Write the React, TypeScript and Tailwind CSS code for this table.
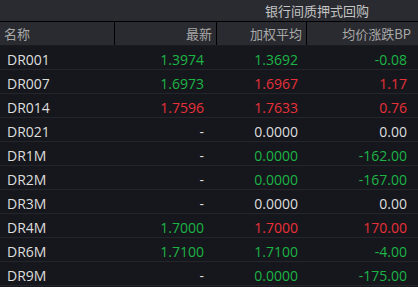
import React from "react";

type Row = { name: string; last: string; avg: string; bp: string; lc: string; ac: string; bc: string };
const G = "text-[#1db446]";
const R = "text-[#e8303a]";
const W = "text-[#dedede]";

const rows: Row[] = [
  { name: "DR001", last: "1.3974", avg: "1.3692", bp: "-0.08", lc: G, ac: G, bc: G },
  { name: "DR007", last: "1.6973", avg: "1.6967", bp: "1.17", lc: G, ac: R, bc: R },
  { name: "DR014", last: "1.7596", avg: "1.7633", bp: "0.76", lc: R, ac: R, bc: R },
  { name: "DR021", last: "-", avg: "0.0000", bp: "0.00", lc: W, ac: W, bc: W },
  { name: "DR1M", last: "-", avg: "0.0000", bp: "-162.00", lc: W, ac: G, bc: G },
  { name: "DR2M", last: "-", avg: "0.0000", bp: "-167.00", lc: W, ac: G, bc: G },
  { name: "DR3M", last: "-", avg: "0.0000", bp: "0.00", lc: W, ac: W, bc: W },
  { name: "DR4M", last: "1.7000", avg: "1.7000", bp: "170.00", lc: G, ac: R, bc: R },
  { name: "DR6M", last: "1.7100", avg: "1.7100", bp: "-4.00", lc: G, ac: G, bc: G },
  { name: "DR9M", last: "-", avg: "0.0000", bp: "-175.00", lc: W, ac: G, bc: G },
];

export default function App() {
  return (
    <div
      className="w-[418px] h-[287px] overflow-hidden bg-[#16171c] text-[14px]"
      style={{ fontFamily: '"Open Sans", "Noto Sans CJK SC", sans-serif' }}
    >
      <div className="flex h-[21px] bg-[#2a2b30]">
        <div className="w-[216px]" />
        <div className="flex-1 flex items-center justify-center text-[13px] text-[#c4c4c4]" style={{ fontFamily: '"Noto Sans CJK SC", sans-serif' }}>
          银行间质押式回购
        </div>
      </div>
      <div className="h-px bg-black" />
      <div
        className="flex h-[24px] bg-[#2a2b30] text-[13px] text-[#a8a8a8] border-b border-[#1a1b1f]"
        style={{ fontFamily: '"Noto Sans CJK SC", sans-serif' }}
      >
        <div className="w-[114px] flex items-center pl-[4px]">名称</div>
        <div className="w-px bg-black" />
        <div className="w-[101px] flex items-center justify-end pr-[4px]">最新</div>
        <div className="w-px bg-black" />
        <div className="w-[89px] flex items-center justify-end pr-[4px]">加权平均</div>
        <div className="w-px bg-black" />
        <div className="flex-1 flex items-center justify-end pr-[7px]">均价涨跌BP</div>
      </div>
      {rows.map((r) => (
        <div key={r.name} className="flex h-[24px] pt-[3px] border-b border-[#24262b]">
          <div className={`w-[115px] flex items-center pl-[7px] ${W}`}>{r.name}</div>
          <div className={`w-[102px] flex items-center justify-end pr-[13px] ${r.lc}`}>{r.last}</div>
          <div className={`w-[90px] flex items-center justify-end pr-[9px] ${r.ac}`}>{r.avg}</div>
          <div className={`flex-1 flex items-center justify-end pr-[11px] ${r.bc}`}>{r.bp}</div>
        </div>
      ))}
    </div>
  );
}
